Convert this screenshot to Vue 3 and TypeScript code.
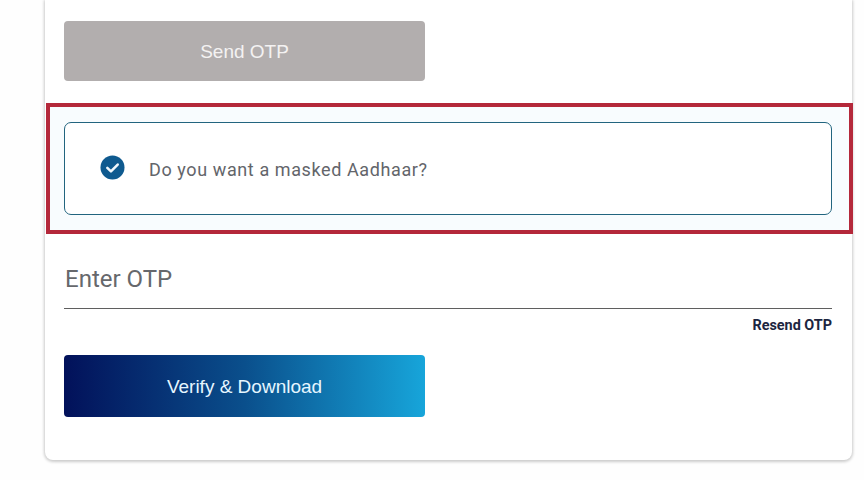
<script setup lang="ts">
const title: string = 'Do you want a masked Aadhaar?'
</script>

<template>
  <main class="page">
    <section class="card">
      <button class="btn btn-grey" type="button">Send OTP</button>
      <div class="highlight">
        <label class="choice">
          <svg class="check" viewBox="0 0 26 26" aria-hidden="true">
            <circle cx="13" cy="13" r="12.5" fill="#0f5a8f" />
            <path d="M7.6 13.4l3.8 3.7 7-7.2" fill="none" stroke="#f2f8fc" stroke-width="2.6" stroke-linecap="round" stroke-linejoin="round" />
          </svg>
          <span class="choice-text">{{ title }}</span>
        </label>
      </div>
      <div class="otp-field">Enter OTP</div>
      <div class="resend">Resend OTP</div>
      <button class="btn btn-blue" type="button">Verify &amp; Download</button>
    </section>
  </main>
</template>

<style>
html, body { margin: 0; background: #fefefe; overflow: hidden; }
</style>

<style scoped>
.page {
  width: 864px;
  height: 480px;
  box-sizing: border-box;
  padding-left: 45px;
  overflow: hidden;
  background: #fefefe;
}
.card {
  width: 807px;
  height: 460px;
  box-sizing: border-box;
  padding: 21px 20px 0 19px;
  display: flex;
  flex-direction: column;
  align-items: flex-start;
  background: #fff;
  border-radius: 0 0 8px 8px;
  box-shadow: 0 1px 3px 1px rgba(0, 0, 0, 0.2);
}
.btn {
  width: 361px;
  border: none;
  border-radius: 4px;
  color: #fff;
  font-family: "Liberation Sans", Arial, sans-serif;
  font-size: 19px;
  padding: 2px 0 0;
}
.btn-grey {
  height: 60px;
  background: #b2aeae;
  color: #f4f2f2;
}
.btn-blue {
  height: 62px;
  margin-top: 21px;
  background: linear-gradient(90deg, #02115a 0%, #0a4f8c 50%, #17a5da 100%);
  color: #e6f6ff;
}
.highlight {
  align-self: stretch;
  margin: 22px -21px 0 -18px;
  padding: 15px 17px 15px 14px;
  border: 4px solid #b4283a;
  background: #f8fcfe;
}
.choice {
  height: 93px;
  box-sizing: border-box;
  display: flex;
  align-items: center;
  gap: 24px;
  padding-left: 35px;
  border: 1px solid #22657f;
  border-radius: 7px;
  background: #fff;
}
.check {
  width: 25px;
  height: 25px;
  flex: none;
  margin-top: -3px;
}
.choice-text {
  font-family: Roboto, Arial, sans-serif;
  font-size: 18px;
  color: #63656a;
  letter-spacing: 0.6px;
  margin-top: 1px;
}
.otp-field {
  align-self: stretch;
  margin-top: 27px;
  height: 48px;
  box-sizing: border-box;
  padding-top: 2px;
  padding-left: 1px;
  border-bottom: 1.5px solid #5f5f5f;
  font-family: Roboto, Arial, sans-serif;
  font-size: 24px;
  line-height: 32px;
  color: #66686c;
}
.resend {
  align-self: flex-end;
  margin-top: 9px;
  font-family: Roboto, Arial, sans-serif;
  font-size: 14.4px;
  font-weight: 700;
  line-height: 16px;
  color: #1c2540;
}
</style>
